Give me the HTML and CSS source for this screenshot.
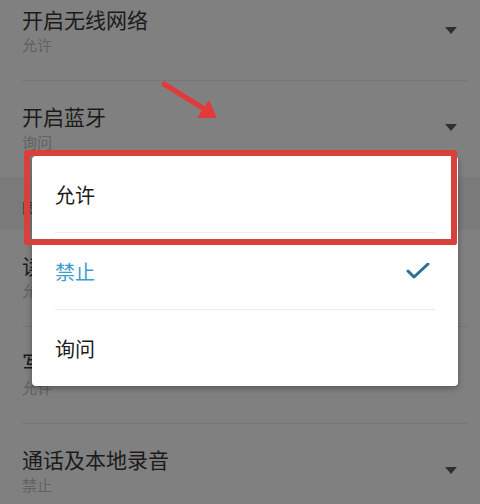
FILE: index.html
```html
<!DOCTYPE html>
<html lang="zh-CN">
<head>
<meta charset="utf-8">
<title>权限设置</title>
<link rel="stylesheet" href="styles.css">
</head>
<body>
<div class="screen">
  <div class="list">
    <div class="row first">
      <div class="texts"><div class="title">开启无线网络</div><div class="sub">允许</div></div>
      <span class="caret"></span>
    </div>
    <div class="divider"></div>
    <div class="row">
      <div class="texts"><div class="title">开启蓝牙</div><div class="sub">询问</div></div>
      <span class="caret"></span>
    </div>
    <div class="section">图片与媒体</div>
    <div class="row">
      <div class="texts"><div class="title">读取通话记录</div><div class="sub">允许</div></div>
      <span class="caret"></span>
    </div>
    <div class="divider"></div>
    <div class="row">
      <div class="texts"><div class="title">写入通话记录</div><div class="sub">允许</div></div>
      <span class="caret"></span>
    </div>
    <div class="divider"></div>
    <div class="row">
      <div class="texts"><div class="title">通话及本地录音</div><div class="sub">禁止</div></div>
      <span class="caret"></span>
    </div>
  </div>

  <div class="dialog">
    <div class="option">允许</div>
    <div class="opt-divider"></div>
    <div class="option selected">
      <span>禁止</span>
      <svg class="check" width="24" height="16" viewBox="0 0 24 16"><path d="M2 8 L8 14 L22 1" fill="none" stroke="#2e6f96" stroke-width="3" stroke-linecap="round" stroke-linejoin="round"/></svg>
    </div>
    <div class="opt-divider"></div>
    <div class="option">询问</div>
  </div>

  <div class="highlight"></div>

  <svg class="pointer" width="70" height="50" viewBox="0 0 70 50">
    <line x1="4" y1="4" x2="46" y2="30" stroke="#e23a3a" stroke-width="5" stroke-linecap="round"/>
    <polygon points="57,38 37,38 49,20" fill="#e23a3a"/>
  </svg>
</div>
</body>
</html>
```

FILE: styles.css
```css
* { box-sizing: border-box; }
html, body { margin: 0; padding: 0; }
body {
  width: 480px;
  height: 504px;
  overflow: hidden;
  background: #808080;
  font-family: "Noto Sans CJK SC", "Noto Sans", sans-serif;
}
.screen {
  position: relative;
  width: 480px;
  height: 504px;
  overflow: hidden;
}
.list {
  display: flex;
  flex-direction: column;
  margin-top: -16px;
}
.row {
  display: flex;
  align-items: center;
  justify-content: space-between;
  padding: 21px 23px 25px 22px;
}
.texts {
  display: flex;
  flex-direction: column;
  gap: 2px;
}
.title {
  font-size: 21px;
  line-height: 28px;
  color: #1b1b1b;
}
.sub {
  font-size: 15px;
  line-height: 20px;
  color: #626262;
}
.caret {
  width: 0;
  height: 0;
  border-left: 6px solid transparent;
  border-right: 6px solid transparent;
  border-top: 7px solid #303030;
}
.divider {
  height: 1px;
  background: #767676;
  margin: 0 12px 0 22px;
}
.section {
  height: 53px;
  background: #7a7a7a;
  padding: 21px 22px 0;
  font-size: 14px;
  line-height: 18px;
  color: #3a3a3a;
}
.dialog {
  position: absolute;
  left: 32px;
  top: 156px;
  width: 426px;
  height: 230px;
  background: #ffffff;
  border-radius: 4px;
  box-shadow: 0 2px 6px rgba(0, 0, 0, 0.35);
  display: flex;
  flex-direction: column;
}
.option {
  height: 76px;
  display: flex;
  align-items: center;
  justify-content: space-between;
  padding: 0 28px 0 23px;
  font-size: 20px;
  color: #1a1a1a;
}
.option.selected { color: #3e9dcb; }
.opt-divider {
  height: 1px;
  background: #e4eef0;
  margin: 0 23px;
}
.highlight {
  position: absolute;
  left: 24px;
  top: 150px;
  width: 433px;
  height: 95px;
  border: 6px solid #d8403c;
  border-radius: 2px;
}
.pointer {
  position: absolute;
  left: 160px;
  top: 80px;
}
```
